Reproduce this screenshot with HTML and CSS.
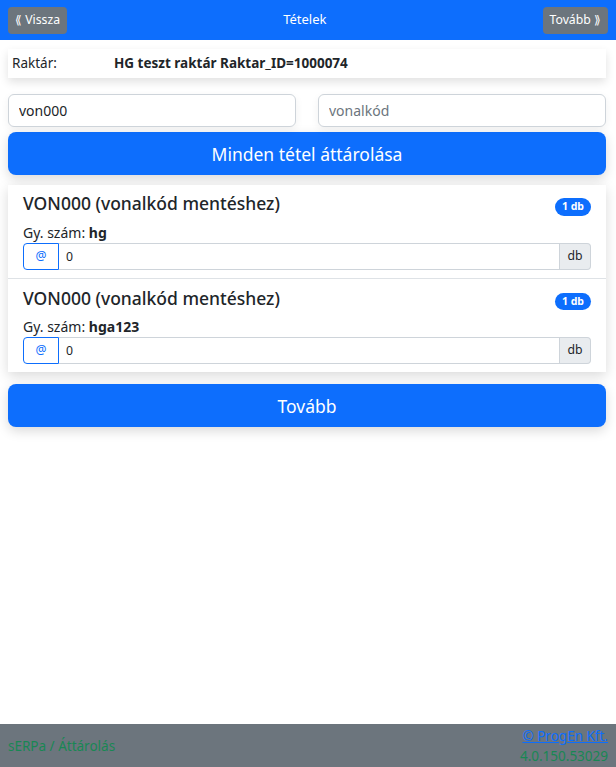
FILE: index.html
```html
<!DOCTYPE html>
<html lang="hu">
<head>
  <meta charset="UTF-8">
  <meta name="viewport" content="width=device-width, initial-scale=1.0">
  <title>Tételek</title>
  <link rel="stylesheet" href="styles.css">
</head>
<body>
  <div class="top-bar">
    <button class="btn-nav">&#10218; Vissza</button>
    <div class="top-title">Tételek</div>
    <button class="btn-nav">Tovább &#10219;</button>
  </div>

  <div class="page">
    <div class="store-card">
      <span class="store-label">Raktár:</span>
      <span class="store-value">HG teszt raktár Raktar_ID=1000074</span>
    </div>

    <div class="search-row">
      <input type="text" class="field" value="von000">
      <input type="text" class="field" placeholder="vonalkód">
    </div>

    <button class="btn-big">Minden tétel áttárolása</button>

    <div class="items">
      <div class="item">
        <div class="item-head">
          <div class="item-title">VON000 (vonalkód mentéshez)</div>
          <span class="badge">1 db</span>
        </div>
        <div class="serial">Gy. szám: <b>hg</b></div>
        <div class="qty-group">
          <span class="qty-at">@</span>
          <input type="text" class="qty-input" value="0">
          <span class="qty-unit">db</span>
        </div>
      </div>
      <div class="item">
        <div class="item-head">
          <div class="item-title">VON000 (vonalkód mentéshez)</div>
          <span class="badge">1 db</span>
        </div>
        <div class="serial">Gy. szám: <b>hga123</b></div>
        <div class="qty-group">
          <span class="qty-at">@</span>
          <input type="text" class="qty-input" value="0">
          <span class="qty-unit">db</span>
        </div>
      </div>
    </div>

    <button class="btn-big btn-next">Tovább</button>
  </div>

  <div class="footer">
    <div class="footer-left">sERPa / Áttárolás</div>
    <div class="footer-right">
      <a href="#">© ProgEn Kft.</a>
      <div>4.0.150.53029</div>
    </div>
  </div>
</body>
</html>
```

FILE: styles.css
```css
* {
  box-sizing: border-box;
}

html, body {
  margin: 0;
  padding: 0;
  height: 100%;
}

body {
  font-family: 'Noto Sans', 'Open Sans', sans-serif;
  font-size: 14px;
  line-height: 1.5;
  color: #212529;
  background: #ffffff;
  display: flex;
  flex-direction: column;
}

.top-bar {
  background: #0d6efd;
  height: 40px;
  display: flex;
  align-items: center;
  justify-content: space-between;
  padding: 0 8px;
}

.btn-nav {
  background: #6c757d;
  color: #ffffff;
  border: none;
  border-radius: 4px;
  font-family: inherit;
  font-size: 12.25px;
  line-height: 1.5;
  padding: 4px 7px;
  height: 27px;
}

.top-title {
  color: #ffffff;
  font-size: 13px;
}

.page {
  flex: 1;
  padding: 9px 8px 0 8px;
}

.store-card {
  display: flex;
  align-items: center;
  height: 29px;
  padding: 0 4px;
  background: #ffffff;
  box-shadow: 0 4px 10px rgba(0, 0, 0, 0.12);
  margin-right: 2px;
  font-size: 13.5px;
}

.store-label {
  width: 102px;
}

.store-value {
  font-weight: 700;
}

.search-row {
  display: flex;
  gap: 22px;
  margin-top: 16px;
  margin-right: 2px;
}

.field {
  flex: 1;
  min-width: 0;
  height: 33px;
  border: 1px solid #ced4da;
  border-radius: 6px;
  padding: 5px 10px;
  font-family: inherit;
  font-size: 14px;
  color: #212529;
  box-shadow: 0 3px 8px rgba(0, 0, 0, 0.06);
}

.field::placeholder {
  color: #6c757d;
}

.btn-big {
  display: block;
  width: calc(100% - 2px);
  height: 43px;
  margin-top: 5px;
  background: #0d6efd;
  color: #ffffff;
  border: none;
  border-radius: 8px;
  font-family: inherit;
  font-size: 17.5px;
  box-shadow: 0 4px 12px rgba(0, 0, 0, 0.15);
}

.items {
  margin-top: 10px;
  margin-right: 2px;
  background: #ffffff;
  box-shadow: 0 4px 12px rgba(0, 0, 0, 0.15);
}

.item {
  padding: 8px 15px 8px 15px;
  border-bottom: 1px solid #dee2e6;
}

.item:last-child {
  border-bottom: none;
  padding-top: 9px;
  padding-bottom: 8px;
}

.item-head {
  display: flex;
  justify-content: space-between;
  align-items: flex-start;
  margin-bottom: 6px;
}

.item-title {
  font-size: 17.5px;
  line-height: 1.2;
  font-weight: 500;
}

.badge {
  background: #0d6efd;
  color: #ffffff;
  font-size: 10.5px;
  font-weight: 700;
  line-height: 1;
  padding: 3px 7px 4px 7px;
  border-radius: 10px;
  margin-top: 5px;
}

.serial {
  line-height: 21px;
}

.qty-group {
  display: flex;
  height: 27px;
  font-size: 12.25px;
}

.qty-at {
  width: 36px;
  display: flex;
  align-items: center;
  justify-content: center;
  color: #0d6efd;
  border: 1px solid #0d6efd;
  border-radius: 4px 0 0 4px;
}

.qty-input {
  flex: 1;
  min-width: 0;
  border: 1px solid #ced4da;
  border-left: none;
  padding: 3px 7px;
  font-family: inherit;
  font-size: 12.25px;
  color: #212529;
}

.qty-unit {
  width: 31px;
  display: flex;
  align-items: center;
  justify-content: center;
  background: #e9ecef;
  border: 1px solid #ced4da;
  border-left: none;
  border-radius: 0 4px 4px 0;
}

.btn-next {
  margin-top: 12px;
}

.footer {
  height: 43px;
  background: #6c757d;
  display: flex;
  justify-content: space-between;
  align-items: center;
  padding: 1px 8px 0 8px;
  font-size: 13.5px;
  color: #198754;
  line-height: 20px;
}

.footer-right {
  text-align: right;
}

.footer-right a {
  color: #0d6efd;
}
```
